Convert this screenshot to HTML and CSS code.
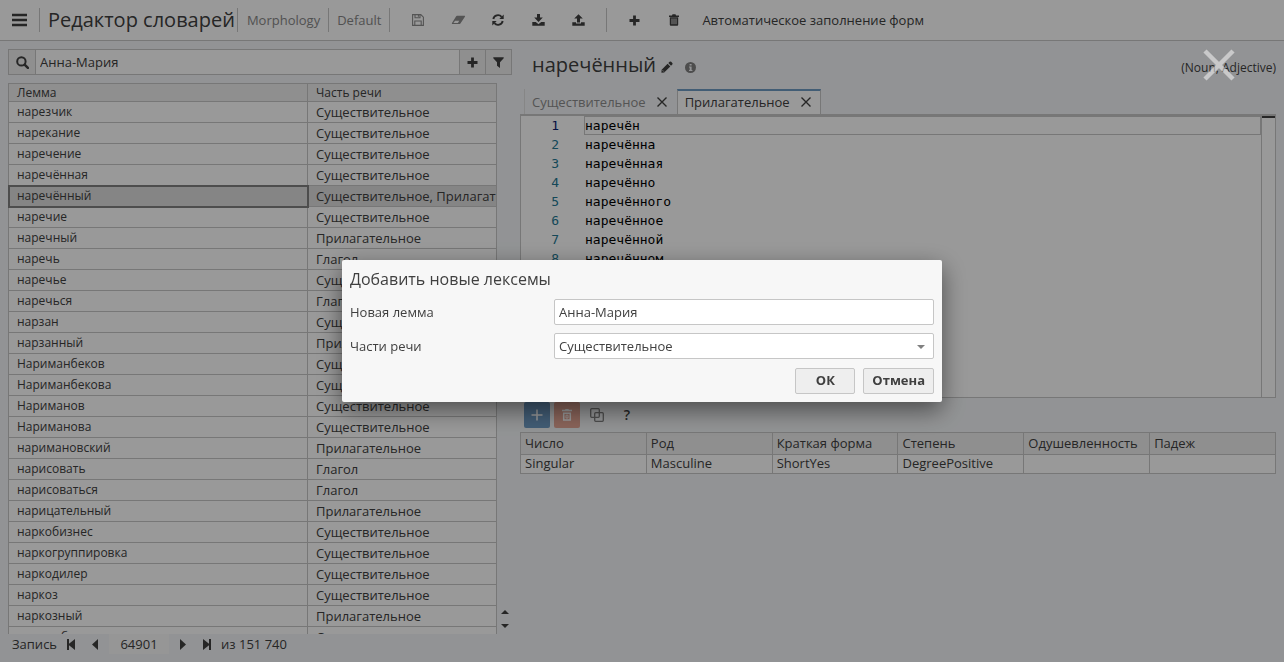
FILE: index.html
```html
<!DOCTYPE html>
<html lang="ru">
<head>
<meta charset="utf-8">
<title>Редактор словарей</title>
<link rel="stylesheet" href="styles.css">
</head>
<body>
<div class="app">
  <header class="topbar">
    <button class="menu-btn" aria-label="Меню"><svg width="16" height="14" viewBox="0 0 16 14"><path d="M0 2h15M0 7h15M0 12h15" stroke="currentColor" stroke-width="2.4"/></svg></button>
    <h1 class="app-title">Редактор словарей</h1>
    <span class="crumb crumb-wide">Morphology</span>
    <span class="crumb">Default</span>
    <div class="tools">
      <button class="tool faded" aria-label="Сохранить"><svg width="12" height="12" viewBox="0 0 12 12" fill="none" stroke="currentColor" stroke-width="1.1"><path d="M.6.6h8.2l2.6 2.6v8.2H.6zM3 .6v3.2h5V.6M2.8 11.4V7h6.4v4.4M6.4 1.2v1.6"/></svg></button>
      <button class="tool faded" aria-label="Очистить"><svg width="15" height="10" viewBox="0 0 15 10"><path d="M6 .8h7.6q.8.2.3 1L9.400 8.400q-.4.700-1.200.700H1.300q-.8-.2-.3-1L5 1.500q.4-.700 1-.7z" fill="currentColor"/><path d="M2.400 7.900L4 5.800h4.300L6.900 7.900z" fill="#fff"/></svg></button>
      <button class="tool" aria-label="Обновить"><svg width="12" height="12" viewBox="0 0 12 12"><path d="M1.300 5A4.800 4.800 0 0 1 9.600 2.800M10.700 7A4.800 4.800 0 0 1 2.400 9.200" fill="none" stroke="currentColor" stroke-width="1.9"/><path d="M11.700.5v4.400H7.300zM.3 11.500V7.100h4.400z" fill="currentColor"/></svg></button>
      <button class="tool" aria-label="Загрузить"><svg width="13" height="12" viewBox="0 0 13 12" fill="currentColor"><path d="M5 0h3v3.600h2.800L6.500 8 2.200 3.600H5zM.3 8h3.500l2.700 2.200L9.200 8h3.500v3.700H.3z"/></svg></button>
      <button class="tool" aria-label="Выгрузить"><svg width="13" height="12" viewBox="0 0 13 12" fill="currentColor"><path d="M6.500.2l4.300 4.300H8V8.600H5V4.500H2.200zM.3 8.300H4v1.300h5V8.300h3.700v3.500H.3z"/></svg></button>
    </div>
    <div class="tools tools-end">
      <button class="tool" aria-label="Добавить"><svg width="11" height="11" viewBox="0 0 11 11"><path d="M5.500.5v10M.5 5.500h10" stroke="currentColor" stroke-width="2.800"/></svg></button>
      <button class="tool" aria-label="Удалить"><svg width="10" height="12" viewBox="0 0 10 12"><path d="M0 1.600h3L3.500.3h3L7 1.600h3v1.300H0zM.8 3.200h8.400v7.600q0 1-1 1H1.800q-1 0-1-1z" fill="currentColor"/><path d="M3 4.500v5.700M5 4.500v5.700M7 4.500v5.700" stroke="#fff" stroke-width=".8"/></svg></button>
      <button class="text-tool">Автоматическое заполнение форм</button>
    </div>
  </header>

  <main class="workspace">
    <section class="words">
      <div class="search">
        <button class="search-btn" aria-label="Искать"><svg width="13" height="13" viewBox="0 0 13 13" fill="none" stroke="currentColor"><circle cx="5.400" cy="5.400" r="4.200" stroke-width="2"/><path d="M8.600 8.600l3.300 3.300" stroke-width="2.500" stroke-linecap="round"/></svg></button>
        <input class="search-input" type="text" aria-label="Поиск леммы" value="Анна-Мария">
        <button class="search-btn" aria-label="Добавить лексему"><svg width="11" height="11" viewBox="0 0 11 11"><path d="M5.500.5v10M.5 5.500h10" stroke="currentColor" stroke-width="2.800"/></svg></button>
        <button class="search-btn" aria-label="Фильтр"><svg width="11" height="11" viewBox="0 0 11 11"><path d="M.3.300h10.400v1L7 5.200V11L4 8.700V5.200L.3 1.300z" fill="currentColor"/></svg></button>
      </div>
      <div class="list">
        <div class="list-clip">
        <table class="lemmas">
          <thead><tr><th class="lemma-col">Лемма</th><th>Часть речи</th></tr></thead>
          <tbody>
            <tr><td>нарезчик</td><td>Существительное</td></tr>
            <tr><td>нарекание</td><td>Существительное</td></tr>
            <tr><td>наречение</td><td>Существительное</td></tr>
            <tr><td>наречённая</td><td>Существительное</td></tr>
            <tr class="selected"><td>наречённый</td><td>Существительное, Прилагательное</td></tr>
            <tr><td>наречие</td><td>Существительное</td></tr>
            <tr><td>наречный</td><td>Прилагательное</td></tr>
            <tr><td>наречь</td><td>Глагол</td></tr>
            <tr><td>наречье</td><td>Существительное</td></tr>
            <tr><td>наречься</td><td>Глагол</td></tr>
            <tr><td>нарзан</td><td>Существительное</td></tr>
            <tr><td>нарзанный</td><td>Прилагательное</td></tr>
            <tr><td>Нариманбеков</td><td>Существительное</td></tr>
            <tr><td>Нариманбекова</td><td>Существительное</td></tr>
            <tr><td>Нариманов</td><td>Существительное</td></tr>
            <tr><td>Нариманова</td><td>Существительное</td></tr>
            <tr><td>наримановский</td><td>Прилагательное</td></tr>
            <tr><td>нарисовать</td><td>Глагол</td></tr>
            <tr><td>нарисоваться</td><td>Глагол</td></tr>
            <tr><td>нарицательный</td><td>Прилагательное</td></tr>
            <tr><td>наркобизнес</td><td>Существительное</td></tr>
            <tr><td>наркогруппировка</td><td>Существительное</td></tr>
            <tr><td>наркодилер</td><td>Существительное</td></tr>
            <tr><td>наркоз</td><td>Существительное</td></tr>
            <tr><td>наркозный</td><td>Прилагательное</td></tr>
            <tr><td>наркомбат</td><td>Существительное</td></tr>
          </tbody>
        </table>
        </div>
        <div class="steps">
          <button class="step" aria-label="Вверх"><svg width="8" height="4" viewBox="0 0 8 4"><path d="M0 4l4-4 4 4z" fill="currentColor"/></svg></button>
          <button class="step" aria-label="Вниз"><svg width="8" height="4" viewBox="0 0 8 4"><path d="M0 0l4 4 4-4z" fill="currentColor"/></svg></button>
        </div>
      </div>
      <div class="pager">
        <label for="record">Запись</label>
        <button class="page-btn" aria-label="Первая"><svg width="9" height="11" viewBox="0 0 9 11"><path d="M0 0h2v4.800L8 0v11L2 6.200V11H0z" fill="currentColor"/></svg></button>
        <button class="page-btn" aria-label="Предыдущая"><svg width="6" height="11" viewBox="0 0 6 11"><path d="M6 0v11L0 5.500z" fill="currentColor"/></svg></button>
        <input class="record" id="record" type="text" value="64901">
        <button class="page-btn" aria-label="Следующая"><svg width="6" height="11" viewBox="0 0 6 11"><path d="M0 0v11l6-5.500z" fill="currentColor"/></svg></button>
        <button class="page-btn" aria-label="Последняя"><svg width="9" height="11" viewBox="0 0 9 11"><path d="M8 0H6v4.800L0 0v11l6-4.800V11h2z" fill="currentColor"/></svg></button>
        <span>из 151 740</span>
      </div>
    </section>

    <section class="entry">
      <div class="entry-head">
        <h2 class="entry-title">наречённый</h2>
        <button class="mini" aria-label="Переименовать"><svg width="12" height="12" viewBox="0 0 12 12"><path d="M8.600.8q.8-.8 1.600 0l1.100 1.100q.7.700 0 1.500L10 4.700 7.300 2zM6.600 2.700l2.700 2.700L3.200 11.500.4 11.700.6 8.800z" fill="currentColor"/><path d="M1.500 9.200l1.400 1.400" stroke="#f4f6f8" stroke-width=".7"/></svg></button>
        <button class="mini info" aria-label="Сведения"><svg width="11" height="11" viewBox="0 0 11 11"><circle cx="5.500" cy="5.500" r="5.500" fill="currentColor"/><path d="M4.600 2h2v1.600h-2zM4 4.600h2.600v3.300h.8V9H4V7.900h.7V5.600H4z" fill="#f4f6f8"/></svg></button>
        <span class="pos-tags">(Noun, Adjective)</span>
      </div>
      <div class="tabs" role="tablist">
        <div class="tab"><button class="tab-name" role="tab">Существительное</button><button class="tab-close" aria-label="Закрыть"><svg width="10" height="10" viewBox="0 0 10 10"><path d="M.5.500l9 9M9.500.500l-9 9" stroke="currentColor" stroke-width="1.400"/></svg></button></div>
        <div class="tab active"><button class="tab-name" role="tab" aria-selected="true">Прилагательное</button><button class="tab-close" aria-label="Закрыть"><svg width="10" height="10" viewBox="0 0 10 10"><path d="M.5.500l9 9M9.500.500l-9 9" stroke="currentColor" stroke-width="1.400"/></svg></button></div>
      </div>
      <div class="editor">
        <ol class="code">
          <li class="line current"><span class="num">1</span><span class="word">наречён</span></li>
          <li class="line"><span class="num">2</span><span class="word">наречённа</span></li>
          <li class="line"><span class="num">3</span><span class="word">наречённая</span></li>
          <li class="line"><span class="num">4</span><span class="word">наречённо</span></li>
          <li class="line"><span class="num">5</span><span class="word">наречённого</span></li>
          <li class="line"><span class="num">6</span><span class="word">наречённое</span></li>
          <li class="line"><span class="num">7</span><span class="word">наречённой</span></li>
          <li class="line"><span class="num">8</span><span class="word">наречённом</span></li>
        </ol>
        <div class="ruler"></div>
      </div>
      <div class="form-tools">
        <button class="sq add" aria-label="Добавить форму"><svg width="12" height="12" viewBox="0 0 12 12"><path d="M6 .5v11M.5 6h11" stroke="currentColor" stroke-width="1.500"/></svg></button>
        <button class="sq remove" aria-label="Удалить форму"><svg width="10" height="12" viewBox="0 0 10 12" fill="none" stroke="currentColor" stroke-width="1.500"><path d="M0 1.500h10M3.300.700h3.400M1.700 4.200h6.600v6.800H1.700z"/><path d="M4 6.200h2v2.800H4z" stroke-width=".8"/></svg></button>
        <button class="sq copy" aria-label="Копировать форму"><svg width="14" height="14" viewBox="0 0 14 14" fill="none" stroke="currentColor" stroke-width="1.300"><rect x=".7" y=".7" width="8.600" height="8.600" rx="1"/><rect x="4.700" y="4.700" width="8.600" height="8.600" rx="1"/></svg></button>
        <button class="sq help">?</button>
      </div>
      <table class="forms">
        <thead><tr><th>Число</th><th>Род</th><th>Краткая форма</th><th>Степень</th><th>Одушевленность</th><th>Падеж</th></tr></thead>
        <tbody><tr><td>Singular</td><td>Masculine</td><td>ShortYes</td><td>DegreePositive</td><td></td><td></td></tr></tbody>
      </table>
    </section>
  </main>
</div>

<div class="overlay">
  <button class="overlay-close" aria-label="Закрыть окно"><svg width="32" height="32" viewBox="0 0 32 32"><path d="M2 2l28 28M30 2L2 30" stroke="currentColor" stroke-width="4.500"/></svg></button>
  <form class="dialog" role="dialog" aria-labelledby="dialog-title">
    <h3 class="dialog-title" id="dialog-title">Добавить новые лексемы</h3>
    <div class="field">
      <label for="lemma">Новая лемма</label>
      <input class="control" id="lemma" type="text" value="Анна-Мария">
    </div>
    <div class="field">
      <label for="pos">Части речи</label>
      <div class="select-wrap">
        <select class="control" id="pos"><option>Существительное</option></select>
        <svg class="caret" width="8" height="4" viewBox="0 0 8 4"><path d="M0 0l4 4 4-4z" fill="currentColor"/></svg>
      </div>
    </div>
    <div class="actions">
      <button class="action" type="button">ОК</button>
      <button class="action" type="button">Отмена</button>
    </div>
  </form>
</div>
</body>
</html>
```
FILE: styles.css
```css
* {
  box-sizing: border-box;
}

body {
  margin: 0;
  font: 13px/18px "Open Sans", "Noto Sans", sans-serif;
  color: #404040;
  background: #f4f6f8;
}

button,
input,
select {
  margin: 0;
  padding: 0;
  border: 0;
  font: inherit;
  color: inherit;
  background: none;
}

button {
  display: inline-flex;
  align-items: center;
  justify-content: center;
}

h1,
h2,
h3 {
  margin: 0;
  font-weight: 400;
}

.app {
  display: flex;
  flex-direction: column;
  height: 100vh;
}

/* Top bar */
.topbar {
  display: flex;
  align-items: center;
  flex: none;
  height: 41px;
  background: #fff;
  border-bottom: 1px solid #c6c6c6;
}

.menu-btn {
  width: 39px;
  height: 24px;
}

.app-title,
.crumb,
.tools {
  display: flex;
  align-items: center;
  height: 24px;
  border-left: 1px solid #c6c6c6;
}

.app-title {
  padding: 0 2px 0 8px;
  font-size: 20px;
  white-space: nowrap;
}

.crumb {
  padding: 0 8px;
  color: #888;
}

.crumb-wide {
  padding-left: 9px;
}

.tools {
  padding: 0 8px;
}

.tools-end {
  padding: 0 7px;
}

.tool {
  width: 40px;
  height: 24px;
}

.tool.faded {
  color: #8c8c8c;
}

.text-tool {
  padding: 0 8px;
  white-space: nowrap;
}

/* Panels */
.workspace {
  display: flex;
  flex: 1;
  gap: 8px;
  min-height: 0;
  padding: 8px 8px 0;
}

.words {
  display: flex;
  flex-direction: column;
  flex: 0 0 504px;
  min-height: 0;
}

.search {
  display: flex;
  flex: none;
  height: 26px;
  border: 1px solid #c6c6c6;
  background: #fff;
}

.search-btn {
  width: 26px;
  background: #efefef;
}

.search-input {
  flex: 1;
  min-width: 0;
  padding: 0 4px;
  border-left: 1px solid #c6c6c6;
}

.search-input ~ .search-btn {
  border-left: 1px solid #c6c6c6;
}

.list {
  display: flex;
  flex: 1;
  min-height: 0;
  margin-top: 8px;
}

.list-clip {
  flex: 1;
  overflow: hidden;
}

.lemmas,
.forms {
  width: 100%;
  table-layout: fixed;
  border-collapse: separate;
  border-spacing: 0;
  background: #fff;
  border-top: 1px solid #c6c6c6;
  border-left: 1px solid #c6c6c6;
}

.lemmas th,
.lemmas td,
.forms th,
.forms td {
  font-weight: 400;
  text-align: left;
  border-right: 1px solid #c6c6c6;
  border-bottom: 1px solid #c6c6c6;
  white-space: nowrap;
  overflow: hidden;
}

.lemmas th {
  height: 18px;
  padding: 0 8px;
  font-size: 12px;
  line-height: 16px;
  background: #efefef;
}

.lemma-col {
  width: 299px;
}

.lemmas td {
  height: 21px;
  padding: 1px 0 0 8px;
  line-height: 19px;
}

.lemmas td:first-child {
  padding: 0 0 1px 8px;
  font-size: 12px;
}

.lemmas .selected td {
  background: #dedede;
}

.lemmas .selected td:first-child {
  outline: 2px solid #808080;
  outline-offset: -1px;
}

.steps {
  display: flex;
  flex-direction: column;
  align-items: center;
  justify-content: flex-end;
  flex: 0 0 15px;
  gap: 10px;
  padding-bottom: 6px;
}

.step {
  height: 4px;
}

.pager {
  display: flex;
  align-items: center;
  flex: none;
  height: 28px;
  padding: 0 4px 8px;
}

.page-btn {
  width: 24px;
  height: 20px;
}

.page-btn + span {
  margin-left: 2px;
}

.pager label {
  margin-right: 2px;
}

.record {
  width: 60px;
  height: 20px;
  margin: 0 2px;
  text-align: center;
  background: #fafafa;
}

/* Entry */
.entry {
  flex: 1;
  min-width: 0;
}

.entry-head {
  display: flex;
  align-items: center;
  height: 32px;
  padding-left: 12px;
}

.entry-title {
  font-size: 20px;
  line-height: 32px;
}

.mini {
  width: 12px;
  height: 12px;
  margin: 4px 0 0 5px;
}

.mini + .mini {
  margin-left: 11px;
}

.info {
  color: #808080;
}

.pos-tags {
  margin: 6px 0 0 auto;
  font-size: 12px;
}

.tabs {
  display: flex;
  align-items: flex-end;
  margin-top: 8px;
  padding-left: 4px;
  border-bottom: 1px solid #c6c6c6;
}

.tab {
  display: flex;
  gap: 11px;
  height: 25px;
  padding: 1px 9px 0 7px;
  color: #8c8c8c;
  border-left: 1px solid #e0e0e0;
}

.tab.active {
  color: inherit;
  padding: 0 8px 1px 7px;
  background: #fff;
  border: 1px solid #c6c6c6;
  border-top: 2px solid #6e9bc4;
  border-bottom: 0;
}

.tab-close {
  width: 11px;
  color: #404040;
}

.editor {
  display: flex;
  height: 283px;
  background: #fff;
  border: 1px solid #c6c6c6;
}

.code {
  flex: 1;
  margin: 0;
  padding: 0;
  list-style: none;
  font: 13px/19px "DejaVu Sans Mono", monospace;
  color: #000;
}

.line {
  display: flex;
  height: 19px;
}

.num {
  width: 38px;
  margin-right: 26px;
  text-align: right;
  color: #237893;
}

.word {
  flex: 1;
}

.current .num {
  color: #0b216f;
}

.current .word {
  line-height: 17px;
  border: 1px solid #c6c6c6;
  border-left: 0;
  box-shadow: -1px 0 #c6c6c6;
}

.ruler {
  width: 14px;
  border-left: 1px solid #c6c6c6;
  background: linear-gradient(#404040, #404040) 0 0 / 100% 2px no-repeat;
}

.form-tools {
  display: flex;
  gap: 4px;
  padding: 4px;
}

.sq {
  width: 26px;
  height: 26px;
  border-radius: 2px;
}

.add {
  color: #fff;
  background: #6e9bc4;
}

.remove {
  color: #fff;
  background: #e6a796;
}

.copy {
  color: #808080;
}

.help {
  font-size: 14px;
  font-weight: 600;
}

.forms th,
.forms td {
  padding: 0 4px;
}

.forms th {
  height: 22px;
  padding-bottom: 2px;
  background: #efefef;
}

.forms td {
  height: 19px;
  padding-bottom: 1px;
  line-height: 17px;
}

/* Dialog */
.overlay {
  position: fixed;
  inset: 0;
  display: flex;
  align-items: center;
  justify-content: center;
  background: rgba(0, 0, 0, 0.4);
}

.overlay-close {
  position: absolute;
  top: 49px;
  right: 49px;
  color: rgba(255, 255, 255, 0.5);
}

.dialog {
  width: 600px;
  padding: 8px;
  background: #f7f7f7;
  border-radius: 2px;
  box-shadow: 0 8px 24px rgba(0, 0, 0, 0.5);
}

.dialog-title {
  font-size: 16px;
  line-height: 23px;
}

.field {
  display: grid;
  grid-template-columns: 196px 1fr;
  align-items: center;
  gap: 8px;
  margin-top: 8px;
}

.control {
  width: 100%;
  height: 26px;
  padding: 0 4px;
  background: #fff;
  border: 1px solid #c6c6c6;
  border-radius: 2px;
  appearance: none;
}

.select-wrap {
  position: relative;
  display: flex;
}

.caret {
  position: absolute;
  top: 12px;
  right: 9px;
  color: #808080;
  pointer-events: none;
}

.actions {
  display: flex;
  justify-content: flex-end;
  gap: 8px;
  margin-top: 9px;
}

.action {
  min-width: 60px;
  height: 26px;
  padding: 0 8px 2px;
  font-weight: 700;
  background: #eee;
  border: 1px solid #c6c6c6;
  border-radius: 2px;
}
```
